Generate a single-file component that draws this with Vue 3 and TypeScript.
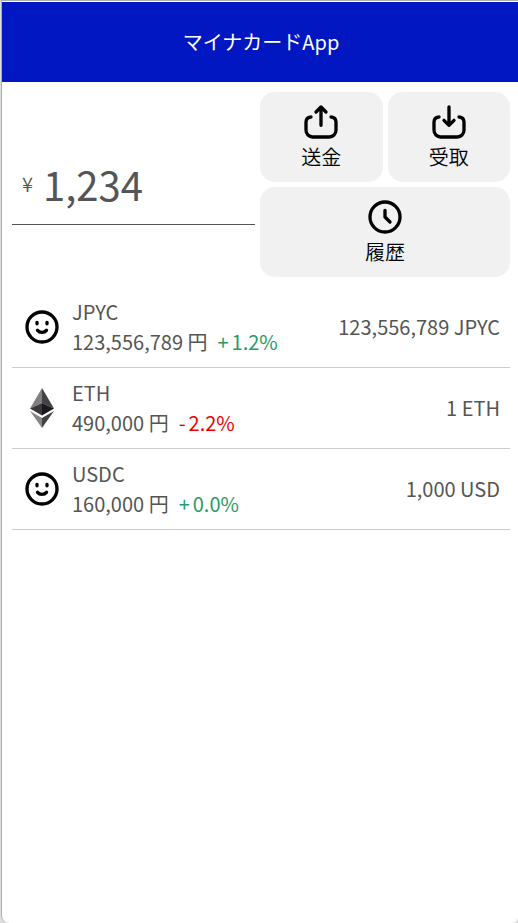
<script setup lang="ts">
interface Asset {
  symbol: string
  yen: string
  sign: '+' | '-'
  change: string
  holding: string
  icon: 'smile' | 'eth'
}

const balance = '1,234'

const assets: Asset[] = [
  { symbol: 'JPYC', yen: '123,556,789', sign: '+', change: '1.2%', holding: '123,556,789 JPYC', icon: 'smile' },
  { symbol: 'ETH', yen: '490,000', sign: '-', change: '2.2%', holding: '1 ETH', icon: 'eth' },
  { symbol: 'USDC', yen: '160,000', sign: '+', change: '0.0%', holding: '1,000 USD', icon: 'smile' },
]
</script>

<template>
  <div class="app">
    <header class="header">
      <h1 class="title">マイナカードApp</h1>
    </header>
    <main class="main">
      <section class="summary">
        <div class="balance">
          <span class="currency">¥</span>
          <span class="amount">{{ balance }}</span>
        </div>
        <div class="actions">
          <button type="button" class="action">
            <svg class="icon line" viewBox="0 0 24 24" aria-hidden="true">
              <path d="M6 9C4 9.200 3 10.200 3 12v5a4 4 0 0 0 4 4h10a4 4 0 0 0 4-4v-5c0-1.800-1-2.800-3-3" />
              <path d="M12 14V3M9 6l3-3 3 3" />
            </svg>
            送金
          </button>
          <button type="button" class="action">
            <svg class="icon line" viewBox="0 0 24 24" aria-hidden="true">
              <path d="M6 9C4 9.200 3 10.200 3 12v5a4 4 0 0 0 4 4h10a4 4 0 0 0 4-4v-5c0-1.800-1-2.800-3-3" />
              <path d="M12 3v11M9 11l3 3 3-3" />
            </svg>
            受取
          </button>
          <button type="button" class="action wide">
            <svg class="icon line" viewBox="0 0 24 24" aria-hidden="true">
              <circle cx="12" cy="12" r="9" />
              <path d="M12 8v4l3 3" />
            </svg>
            履歴
          </button>
        </div>
      </section>
      <ul class="assets">
        <li v-for="asset in assets" :key="asset.symbol" class="asset">
          <svg v-if="asset.icon === 'smile'" class="icon line" viewBox="0 0 24 24" aria-hidden="true">
            <circle cx="12" cy="12" r="9" />
            <path d="M9 9.200v.9M15 9.200v.9" />
            <path d="M9.300 14c1.300 1.600 4.100 1.600 5.400 0" />
          </svg>
          <svg v-else class="icon" viewBox="0 0 40 40" aria-hidden="true">
            <path fill="#808080" d="M20 0v15L8 20.500z" />
            <path fill="#454242" d="M20 0v15l12 5.500z" />
            <path fill="#3a3838" d="M20 15v12.500L8 20.500z" />
            <path fill="#1c1820" d="M20 15v12.500l12-7z" />
            <path fill="#858585" d="M8 23l12 7v10z" />
            <path fill="#454242" d="M32 23l-12 7v10z" />
          </svg>
          <div class="details">
            <span>{{ asset.symbol }}</span>
            <div class="value">
              <span>{{ asset.yen }} 円</span>
              <span class="change" :class="{ down: asset.sign === '-' }">
                <span>{{ asset.sign }}</span>
                <span>{{ asset.change }}</span>
              </span>
            </div>
          </div>
          <span class="holding">{{ asset.holding }}</span>
        </li>
      </ul>
    </main>
  </div>
</template>

<style>
body {
  background: #dcdcdc;
}
</style>

<style scoped>
.app {
  box-sizing: border-box;
  min-height: 100vh;
  margin-left: 1px;
  padding-top: 1px;
  border-top: 1px solid #b0b0b0;
  border-left: 1px solid #b0b0b0;
  border-radius: 0 0 6px 8px;
  background: #fff;
  color: #555;
  font-family: "Noto Sans CJK JP", sans-serif;
  font-size: 20px;
  font-weight: 400;
  line-height: 30px;
}

.header {
  display: flex;
  align-items: center;
  justify-content: center;
  height: 80px;
  padding-left: 2px;
  background: #0017c1;
  color: #fff;
}

.title {
  margin: 0;
  font-size: 20px;
  font-weight: 400;
}

.main {
  padding: 10px 8px 10px 10px;
}

.summary {
  display: grid;
  grid-template-columns: 243fr 250fr;
  gap: 5px;
  align-items: center;
}

.balance {
  display: flex;
  align-items: center;
  gap: 10px;
  padding: 10px;
  border-bottom: 1px solid #555;
}

.currency {
  font-weight: 350;
}

.amount {
  font-size: 40px;
  line-height: 60px;
}

.actions {
  display: grid;
  grid-template-columns: 1fr 1fr;
  gap: 5px;
}

.action {
  display: flex;
  flex-direction: column;
  align-items: center;
  padding: 10px;
  border: 0;
  border-radius: 15px;
  background: #f1f1f1;
  color: #000;
  font: inherit;
  font-weight: 350;
  cursor: pointer;
}

.wide {
  grid-column: span 2;
}

.icon {
  flex: none;
  width: 40px;
  height: 40px;
}

.line {
  fill: none;
  stroke: #000;
  stroke-width: 2;
  stroke-linecap: round;
  stroke-linejoin: round;
}

.assets {
  margin: 10px 0 0;
  padding: 0;
  list-style: none;
}

.asset {
  display: flex;
  align-items: center;
  gap: 10px;
  padding: 10px;
  border-bottom: 1px solid #ccc;
}

.details {
  flex: 1;
}

.value {
  display: flex;
  gap: 10px;
}

.change {
  display: flex;
  gap: 3px;
  color: #2a9a66;
}

.down {
  color: #ec0000;
}
</style>
